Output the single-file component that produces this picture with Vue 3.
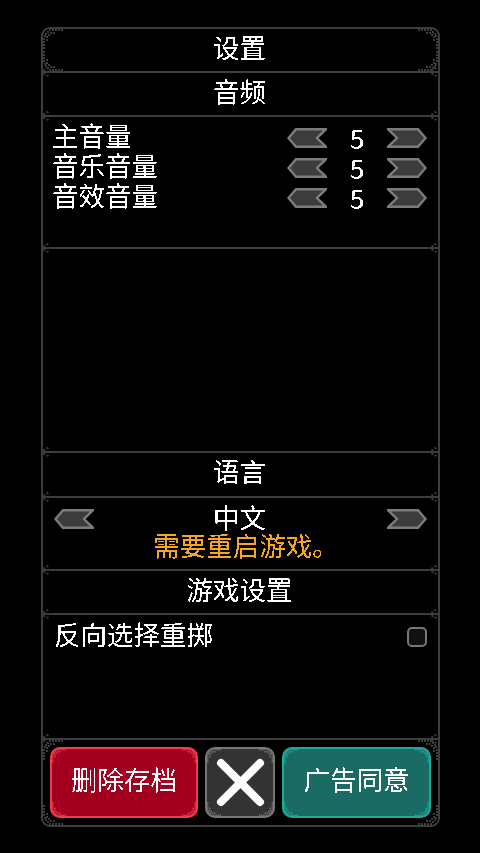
<script setup>
// dot pattern of the panel and button corners, in a 20x20 box
const dots = [
  [6, 0], [9, 0], [12, 0], [15, 0], [18, 0],
  [4, 2], [7, 3], [10, 3], [2, 4], [5, 5],
  [1, 6], [3, 7], [0, 9], [3, 10], [0, 12], [0, 15], [0, 18],
]
const corners = ['tl', 'tr', 'bl', 'br']
const volumes = [
  { label: '主音量', value: 5 },
  { label: '音乐音量', value: 5 },
  { label: '音效音量', value: 5 },
]
</script>

<template>
  <svg width="0" height="0" class="defs">
    <defs>
      <!-- hard text edges, the original is a bitmap font -->
      <filter id="crisp" color-interpolation-filters="sRGB">
        <feComponentTransfer>
          <feFuncA type="discrete" tableValues="0 1" />
        </feComponentTransfer>
      </filter>
      <symbol id="corner-dots" viewBox="0 0 20 20">
        <rect v-for="d in dots" :key="d.join()" :x="d[0]" :y="d[1]" width="2" height="2" fill="currentColor" />
      </symbol>
      <symbol id="arrow" viewBox="0 0 40 20">
        <polygon points="1.5,10 9,1.2 39,1.2 30,10 39,18.8 9,18.8" fill="#3c3c3c" stroke="#7c7c7c" stroke-width="2.4" />
      </symbol>
    </defs>
  </svg>

  <div class="page">
    <div class="panel">
      <div class="row head">
        <span class="txt">设置</span>
        <svg v-for="c in corners" :key="c" class="corner" :class="c"><use href="#corner-dots" /></svg>
      </div>
      <div class="divider"></div>
      <div class="row head"><span class="txt">音频</span></div>
      <div class="divider"></div>

      <div class="row audio">
        <div v-for="v in volumes" :key="v.label" class="volume">
          <span class="label txt">{{ v.label }}</span>
          <svg class="arrow"><use href="#arrow" /></svg>
          <span class="value txt">{{ v.value }}</span>
          <svg class="arrow flip"><use href="#arrow" /></svg>
        </div>
      </div>
      <div class="divider"></div>

      <div class="row empty"></div>
      <div class="divider"></div>

      <div class="row head lang-head"><span class="txt">语言</span></div>
      <div class="divider"></div>

      <div class="row language">
        <svg class="arrow"><use href="#arrow" /></svg>
        <div class="lang-text">
          <div class="txt">中文</div>
          <div class="warn txt">需要重启游戏。</div>
        </div>
        <svg class="arrow flip"><use href="#arrow" /></svg>
      </div>
      <div class="divider"></div>

      <div class="row head"><span class="txt">游戏设置</span></div>
      <div class="divider"></div>

      <div class="row game">
        <span class="txt">反向选择重掷</span>
        <span class="check"></span>
      </div>
      <div class="divider"></div>

      <div class="row buttons">
        <button class="btn red">
          <span class="txt">删除存档</span>
          <svg v-for="c in corners" :key="c" class="corner small" :class="c"><use href="#corner-dots" /></svg>
        </button>
        <button class="btn grey">
          <svg class="x" viewBox="0 0 66 67">
            <path d="M14 14 L53 53 M53 14 L14 53" stroke="#fff" stroke-width="8" stroke-linecap="round" />
          </svg>
          <svg v-for="c in corners" :key="c" class="corner small" :class="c"><use href="#corner-dots" /></svg>
        </button>
        <button class="btn teal">
          <span class="txt">广告同意</span>
          <svg v-for="c in corners" :key="c" class="corner small" :class="c"><use href="#corner-dots" /></svg>
        </button>
        <svg v-for="c in corners" :key="c" class="corner" :class="c"><use href="#corner-dots" /></svg>
      </div>
    </div>
  </div>
</template>

<style scoped>
.defs {
  position: absolute;
}

.page {
  width: 480px;
  height: 853px;
  background: #000;
  padding: 27px 40px 0 41px;
  box-sizing: border-box;
  overflow: hidden;
  font-family: "Noto Sans CJK SC", "Noto Sans", sans-serif;
  font-size: 26.5px;
  color: #fff;
}

.txt {
  filter: url(#crisp);
}

.panel {
  position: relative;
  height: 800px;
  box-sizing: border-box;
  border: 2px solid #3d3d3d;
  border-radius: 9px;
  display: flex;
  flex-direction: column;
}

.row {
  position: relative;
  flex: none;
}

.divider {
  position: relative;
  flex: none;
  height: 2px;
  background: #3d3d3d;
}

.divider::before,
.divider::after {
  content: "";
  position: absolute;
  top: -4px;
  width: 3px;
  height: 6px;
  border: 2px dotted #3d3d3d;
  border-radius: 50%;
}

.divider::before {
  left: 0;
}

.divider::after {
  right: 0;
}

.head {
  display: flex;
  align-items: center;
  justify-content: center;
  height: 42px;
  padding: 0 2px 6px 0;
  box-sizing: border-box;
  line-height: 1;
}

.lang-head {
  height: 43px;
}

.corner {
  position: absolute;
  width: 20px;
  height: 20px;
  color: #3d3d3d;
}

.corner.tl {
  top: 0;
  left: 0;
}

.corner.tr {
  top: 0;
  right: 0;
  transform: scaleX(-1);
}

.corner.bl {
  bottom: 0;
  left: 0;
  transform: scaleY(-1);
}

.corner.br {
  bottom: 0;
  right: 0;
  transform: scale(-1, -1);
}

.audio {
  height: 130px;
  padding: 3px 11px 0 9px;
  box-sizing: border-box;
}

.volume {
  display: flex;
  align-items: center;
  height: 30px;
  line-height: 30px;
}

.label {
  flex: 1;
}

.arrow {
  width: 40px;
  height: 20px;
  flex: none;
  margin-top: 6px;
}

.flip {
  transform: scaleX(-1);
}

.value {
  width: 60px;
  text-align: center;
  margin-top: 6px;
}

.empty {
  height: 202px;
}

.language {
  height: 71px;
  display: flex;
  align-items: flex-start;
  padding: 5px 11px 0 11px;
  box-sizing: border-box;
}

.lang-text {
  flex: 1;
  text-align: center;
  line-height: 30px;
  margin-top: -1px;
  padding-right: 2px;
}

.warn {
  color: #f5a623;
  padding-left: 13px;
  margin-top: -2px;
}

.game {
  height: 123px;
  display: flex;
  justify-content: space-between;
  align-items: flex-start;
  padding: 4px 11px 0 11px;
  box-sizing: border-box;
  line-height: 30px;
}

.check {
  width: 20px;
  height: 20px;
  margin-top: 8px;
  box-sizing: border-box;
  border: 2px solid #777;
  border-radius: 5px;
  background: #111;
}

.buttons {
  flex: 1;
  display: flex;
  align-items: center;
  gap: 7px;
  padding: 0 7px;
}

.btn {
  position: relative;
  flex: none;
  width: 148px;
  height: 71px;
  padding: 0 0 8px;
  box-sizing: border-box;
  border: 2px solid;
  border-radius: 10px;
  font: inherit;
  color: #fff;
  display: flex;
  align-items: center;
  justify-content: center;
}

.btn .small {
  width: 14px;
  height: 14px;
}

.red {
  background: #a30020;
  border-color: #f23c4c;
}

.red .corner {
  color: #f23c4c;
}

.grey {
  width: 70px;
  padding: 0;
  background: #333;
  border-color: #777;
}

.grey .corner {
  color: #777;
}

.x {
  width: 66px;
  height: 67px;
}

.teal {
  width: 149px;
  background: #1a6b63;
  border-color: #20a89a;
}

.teal .corner {
  color: #20a89a;
}
</style>

<style>
html,
body {
  background: #000;
}
</style>
